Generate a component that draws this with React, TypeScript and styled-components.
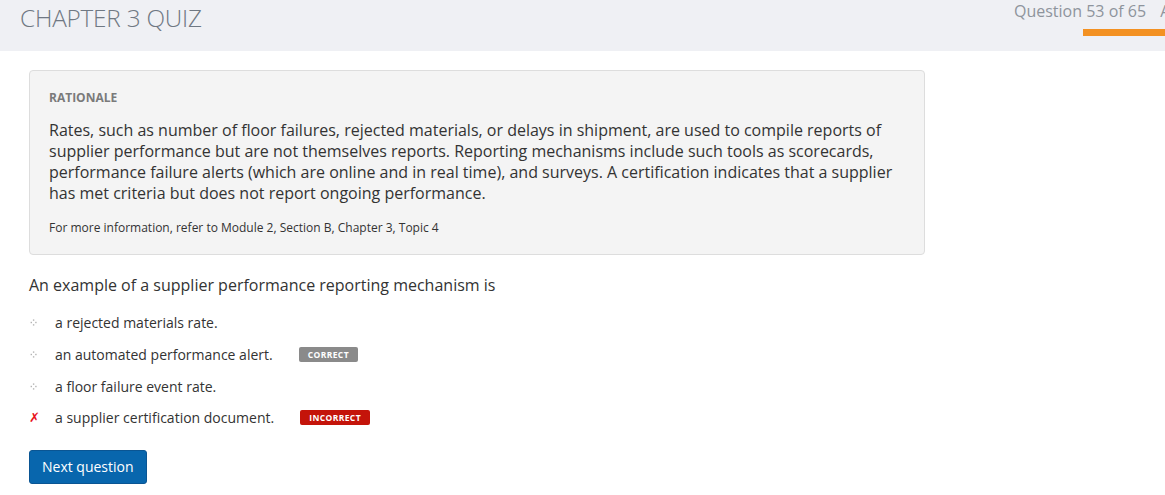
import React from "react";
import styled, { createGlobalStyle } from "styled-components";

const GlobalStyle = createGlobalStyle`
  html, body {
    margin: 0;
    padding: 0;
    background: #ffffff;
    overflow: hidden;
  }
  body {
    font-family: "Open Sans", "Liberation Sans", Arial, sans-serif;
    color: #333333;
  }
`;

const Page = styled.div`
  width: 1165px;
  height: 495px;
  display: flex;
  flex-direction: column;
`;

const TopBar = styled.header`
  height: 51px;
  background: #eff0f4;
  display: flex;
  justify-content: space-between;
  align-items: flex-start;
  flex-shrink: 0;
`;

const Title = styled.h1`
  margin: 0;
  padding: 1px 0 0 20px;
  font-size: 24.3px;
  font-weight: 300;
  line-height: 34px;
  color: #6f7883;
  letter-spacing: -0.2px;
`;

const Progress = styled.div`
  width: 151px;
  overflow: hidden;
  display: flex;
  flex-direction: column;
`;

const ProgressRow = styled.div`
  display: flex;
  gap: 14px;
  white-space: nowrap;
  font-size: 16px;
  line-height: 22px;
  color: #8e949c;
`;

const ProgressBar = styled.div`
  margin: 7px 0 0 69px;
  width: 100px;
  height: 7px;
  flex-shrink: 0;
  background: #f39122;
`;

const Content = styled.main`
  padding: 19px 0 0 29px;
  width: 896px;
`;

const Rationale = styled.section`
  background: #f4f4f4;
  border: 1px solid #dddddd;
  border-radius: 4px;
  padding: 19px 19px 18px 19px;
`;

const Label = styled.div`
  font-size: 12px;
  font-weight: 700;
  line-height: 16px;
  color: #7a7a7a;
`;

const Body = styled.p`
  margin: 14px 0 0;
  font-size: 16px;
  line-height: 21px;
  color: #333333;
`;

const Reference = styled.p`
  margin: 16px 0 0;
  font-size: 12px;
  line-height: 16px;
  color: #333333;
`;

const Question = styled.p`
  margin: 19px 0 0;
  font-size: 16px;
  line-height: 22px;
  color: #333333;
`;

const Options = styled.ul`
  list-style: none;
  margin: 11px 0 0;
  padding: 0;
`;

const Option = styled.li`
  display: flex;
  align-items: center;
  height: 31.7px;
  font-size: 14px;
  color: #333333;
`;

const Marker = styled.span`
  width: 25px;
  display: flex;
  align-items: center;
  padding-left: 1px;
`;

const Cross = styled.span`
  font-family: "DejaVu Sans", sans-serif;
  font-size: 13px;
  font-weight: 700;
  font-style: italic;
  color: #e8141c;
  margin-left: -1px;
`;

const Badge = styled.span<{ $tone: "correct" | "incorrect" }>`
  margin-left: 26px;
  height: 15px;
  padding: 0 9px;
  border-radius: 2px;
  display: inline-flex;
  align-items: center;
  font-size: 8.5px;
  font-weight: 700;
  letter-spacing: 0.4px;
  color: #ffffff;
  background: ${(p) => (p.$tone === "correct" ? "#8a8a8a" : "#c4140a")};
`;

const NextButton = styled.button`
  margin-top: 16px;
  height: 34px;
  padding: 0 12px;
  border: 1px solid #0a5593;
  border-radius: 3px;
  background: #0866ad;
  color: #ffffff;
  font-family: "Open Sans", "Liberation Sans", Arial, sans-serif;
  font-size: 14px;
  cursor: pointer;
`;

const Diamond = () => (
  <svg width="7" height="7" viewBox="0 0 7 7">
    <rect x="2.9" y="0.4" width="1.4" height="1.4" fill="#b4b4b4" />
    <rect x="0.6" y="2.8" width="1.4" height="1.4" fill="#b4b4b4" />
    <rect x="5.2" y="2.8" width="1.4" height="1.4" fill="#b4b4b4" />
    <rect x="2.9" y="5.2" width="1.4" height="1.4" fill="#b4b4b4" />
  </svg>
);

const answers = [
  { text: "a rejected materials rate." },
  { text: "an automated performance alert.", badge: "correct" as const },
  { text: "a floor failure event rate." },
  { text: "a supplier certification document.", badge: "incorrect" as const, picked: true },
];

export default function App() {
  return (
    <Page>
      <GlobalStyle />
      <TopBar>
        <Title>CHAPTER 3 QUIZ</Title>
        <Progress>
          <ProgressRow>
            <span>Question 53 of 65</span>
            <span>A</span>
          </ProgressRow>
          <ProgressBar />
        </Progress>
      </TopBar>
      <Content>
        <Rationale>
          <Label>RATIONALE</Label>
          <Body>
            Rates, such as number of floor failures, rejected materials, or delays in shipment, are
            used to compile reports of supplier performance but are not themselves reports.
            Reporting mechanisms include such tools as scorecards, performance failure alerts
            (which are online and in real time), and surveys. A certification indicates that a
            supplier has met criteria but does not report ongoing performance.
          </Body>
          <Reference>For more information, refer to Module 2, Section B, Chapter 3, Topic 4</Reference>
        </Rationale>
        <Question>An example of a supplier performance reporting mechanism is</Question>
        <Options>
          {answers.map((a) => (
            <Option key={a.text}>
              <Marker>{a.picked ? <Cross>✗</Cross> : <Diamond />}</Marker>
              {a.text}
              {a.badge && (
                <Badge $tone={a.badge}>{a.badge === "correct" ? "CORRECT" : "INCORRECT"}</Badge>
              )}
            </Option>
          ))}
        </Options>
        <NextButton>Next question</NextButton>
      </Content>
    </Page>
  );
}
